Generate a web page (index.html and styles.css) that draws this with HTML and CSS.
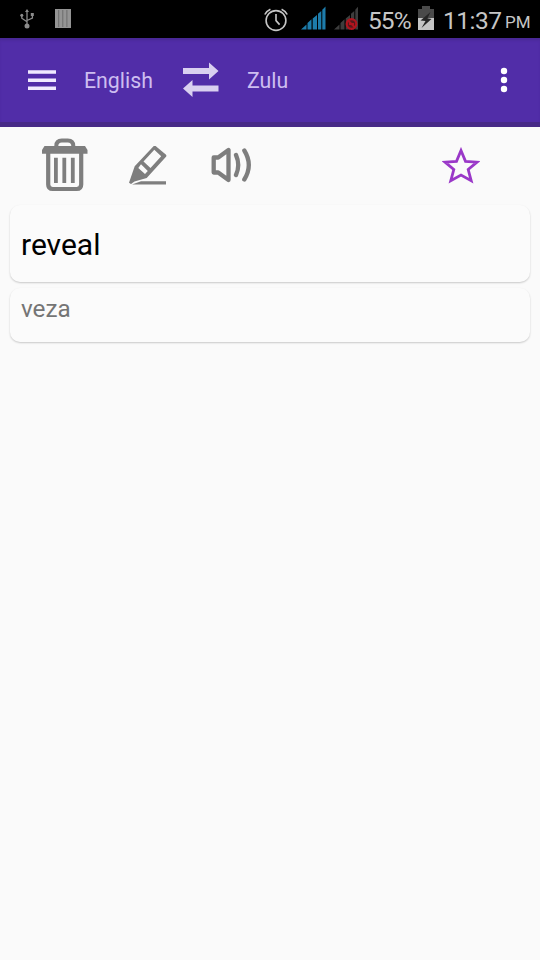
FILE: index.html
```html
<!DOCTYPE html>
<html lang="en">
<head>
<meta charset="utf-8">
<title>English Zulu Dictionary</title>
<link rel="stylesheet" href="styles.css">
</head>
<body>
<div class="status">
  <svg class="usb" width="14" height="20" viewBox="0 0 14 20" fill="none" stroke="#8c8c8c" stroke-width="1.3"><path d="M7 2v14M1.8 6v3.2L7 12.8M12.4 5v4L7 11.5"/><path d="M7 0L9 3H5z" fill="#8c8c8c" stroke="none"/><circle cx="7" cy="17" r="2.500" fill="#8c8c8c" stroke="none"/><circle cx="1.8" cy="6.200" r="1.500" fill="#8c8c8c" stroke="none"/><path d="M10.800 4h3v3h-3z" fill="#8c8c8c" stroke="none"/></svg>
  <svg class="bars" width="16" height="19" viewBox="0 0 16 19"><path d="M0 0h16v19H0z" fill="#949494"/><path d="M3.700 1v17M7.800 1v17M11.900 1v17" stroke="#6c6c6c" stroke-width="1"/></svg>
  <svg class="alarm" width="24" height="24" viewBox="0 0 24 24" fill="none" stroke="#c6c6c6" stroke-width="1.600"><circle cx="12" cy="12.500" r="9.900"/><path d="M12 6v6.600l3.600 4M.8 6.500Q2.500 3 6.400 1.200M23.200 6.500Q21.500 3 17.600 1.200"/></svg>
  <svg class="signal" width="25" height="24" viewBox="0 0 25 24" fill="#1d7cab"><path d="M0 23.500L5.500 18.500V23.500zM6.500 17l4-3.700v10.200h-4zM11.700 12.400l4.300-3.500v14.600h-4.300zM17 7.800L20.300 5v18.500H17zM21.300 3.700L24.500.5v23h-3.200z"/></svg>
  <svg class="nosignal" width="25" height="24" viewBox="0 0 25 24"><path fill="#3d3d3d" d="M0 23.500L5.500 18.500V23.500zM6.500 17l4-3.700v10.200h-4zM11.700 12.400l4.300-3.500v14.600h-4.300zM17 7.800L20.300 5v18.500H17zM21.300 3.700L24 .8v22.700h-2.700z"/><circle cx="17.500" cy="18" r="4.800" fill="#55191c" stroke="#b0141e" stroke-width="2.200"/><path d="M14.500 15l6.500 6.500M15 18h5" stroke="#b0141e" stroke-width="1.800"/></svg>
  <span class="percent">55%</span>
  <svg class="battery" width="16" height="24" viewBox="0 0 16 24"><path d="M0 3h4V0h8v3h4v9H0z" fill="#4a4a4a"/><path d="M0 12h16v12H0z" fill="#c5c5c5"/><path d="M12.500 6L2.500 14.500l5 .5-4 7L13.500 13l-4-.8z" fill="#262626"/></svg>
  <span class="time">11:37</span><span class="meridiem">PM</span>
</div>
<header class="appbar">
  <svg class="menu" width="28" height="21" viewBox="0 0 28 21" fill="#f0eaff"><path d="M0 .3h28v3.500H0zM0 8.600h28v3.400H0zM0 16.500h28v3.500H0z"/></svg>
  <span class="lang from">English</span>
  <svg class="swap" width="36" height="36" viewBox="0 0 36 36" fill="#d9d0f0"><path d="M0 6h26V.5L35.500 9 26 17.500V12H0zM35.500 23.500H9.500V18L0 26.500 9.500 35v-5.500h26z"/></svg>
  <span class="lang to">Zulu</span>
  <svg class="more" width="8" height="26" viewBox="0 0 8 26" fill="#fff"><circle cx="4" cy="4" r="3.200"/><circle cx="4" cy="13" r="3.200"/><circle cx="4" cy="22" r="3.200"/></svg>
</header>
<main>
  <div class="tools">
    <svg class="trash" width="46" height="54" viewBox="0 0 46 54" fill="none" stroke="#7e7e7e"><path d="M6.200 14v32.500q0 4.500 4.500 4.500h24q4.500 0 4.500-4.500V14" stroke-width="4.200"/><path d="M0 15.800V12l2.500-4h40.500l2.500 4v3.800z" fill="#7e7e7e" stroke="none"/><path d="M14.300 9.500V8q0-5.500 5.500-5.500h6q5.500 0 5.500 5.500v1.500" stroke-width="4"/><path d="M13.900 19.800v25.200M22.300 19.800v25.200M30.800 19.800v25.200" stroke-width="3.800"/></svg>
    <svg class="pen" width="38" height="40" viewBox="0 0 38 40" fill="#7e7e7e"><path fill-rule="evenodd" d="M24.500.2q1.200-1 2.400 0L36.800 8.500q1.200 1.200 0 2.500L17.700 32 5.500 35.500 2 38 0 36.700 5.700 20.300zM9.300 22l6.700 6 2.800-3-6.800-6.700zM14.500 15.500l7 6.500L32.200 10.200 25.300 3.800z"/><path d="M3 38.600L12 35.300h25v3.300z"/></svg>
    <svg class="sound" width="40" height="36" viewBox="0 0 40 36" fill="none" stroke="#7e7e7e" stroke-width="4.300" stroke-linejoin="round" stroke-linecap="round"><path d="M2.700 10.500h4.500L17.500 3v30L7.200 25.500H2.700z"/><path d="M25 8q4.500 10 0 20M33.300 3.500q9 14.500 0 29"/></svg>
    <svg class="star" width="38" height="37" viewBox="0 0 38 37"><path d="M19 3.500l4.500 10.800 11.500.8-8.800 7.400 3 11.200L19 28 8.800 33.700l3-11.200L3 15.100l11.500-.8z" fill="none" stroke="#9a38c8" stroke-width="2.800"/></svg>
  </div>
  <section class="card word"><span>reveal</span></section>
  <section class="card meaning"><span>veza</span></section>
</main>
</body>
</html>
```
FILE: styles.css
```css
* { box-sizing: border-box; }
body {
  margin: 0;
  width: 540px;
  height: 960px;
  overflow: hidden;
  background: #fafafa;
  font-family: Roboto, "Liberation Sans", sans-serif;
}
svg { display: block; flex: none; }
span { white-space: nowrap; flex: none; }

.status {
  height: 38px;
  display: flex;
  align-items: flex-start;
  background: #000;
  color: #c6c6c6;
  font-size: 24.500px;
  line-height: 38px;
}
.usb { margin: 9px 0 0 20px; }
.bars { margin: 9px 0 0 21px; }
.alarm { margin: 8px 0 0 193px; }
.signal { margin: 6px 0 0 13px; }
.nosignal { margin: 6px 0 0 8px; }
.percent { margin-left: 9px; width: 50px; padding-top: 2px; letter-spacing: -0.9px; }
.battery { margin-top: 6px; }
.time { margin-left: 9px; width: 62px; padding-top: 2px; letter-spacing: -0.5px; }
.meridiem { padding-top: 3px; font-size: 17px; }

.appbar {
  height: 89px;
  display: flex;
  align-items: center;
  background: #512da8;
  border-bottom: 5px solid #472a87;
  box-shadow: inset 0 3px 3px -1px #482894;
}
.menu { margin: 0 0 0 28px; }
.lang { padding-top: 2px; color: #cdbdf0; font-size: 21.300px; line-height: 30px; }
.from { margin-left: 28px; width: 99px; }
.to { margin-left: 28px; width: 253px; }

.tools {
  height: 78px;
  display: flex;
  align-items: flex-start;
}
.trash { margin: 11px 0 0 42px; }
.pen { margin: 19px 0 0 41px; }
.sound { margin: 20px 0 0 44px; }
.star { margin: 20px 0 0 191px; }

.card {
  margin: 0 10px;
  padding-left: 11px;
  background: #fbfbfb;
  border-radius: 10px;
  box-shadow: 0 1px 2px rgba(0, 0, 0, 0.2);
}
.word {
  height: 77px;
  color: #000;
  font-size: 30px;
  line-height: 80px;
}
.meaning {
  height: 54px;
  margin-top: 6px;
  color: #757575;
  font-size: 24.300px;
  line-height: 42px;
}
```
